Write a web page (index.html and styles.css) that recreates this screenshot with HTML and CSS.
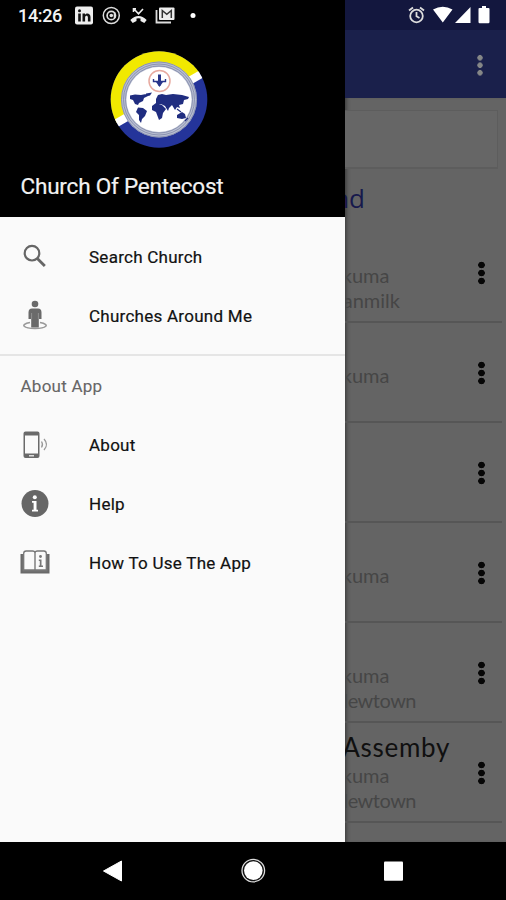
FILE: index.html
```html
<!DOCTYPE html>
<html lang="en">
<head>
<meta charset="utf-8">
<title>Church Of Pentecost</title>
<link rel="stylesheet" href="styles.css">
</head>
<body>
<main class="screen">
  <aside class="drawer">
    <header class="drawer-head">
      <div class="status">
        <span class="clock">14:26</span>
        <svg class="status-icons" width="140" height="30" viewBox="0 0 140 30">
          <rect x="13" y="6.500" width="18" height="18" rx="2" fill="#eee"/>
          <g fill="#111"><circle cx="17.500" cy="10.800" r="1.500"/><rect x="16.200" y="13.500" width="2.600" height="8"/><path d="M20.500 13.500H23v1.200c1.500-2.200 5.500-1.700 5.500 2.300v4.500h-2.600v-4c0-2.600-2.800-2.300-2.800 0v4h-2.600z"/></g>
          <g fill="none" stroke="#ddd"><circle cx="49.300" cy="15.500" r="8" stroke-width="1.500"/><circle cx="49.300" cy="15.500" r="4.200" stroke-width="1.700"/></g><circle cx="49.300" cy="15.500" r="1.800" fill="#ddd"/><path d="M52.500 12v6" stroke="#ddd" stroke-width="1.600"/>
          <path d="M72 9l4.500 4.800L81 9M71.500 12V8.800h2.500" fill="none" stroke="#eee" stroke-width="1.600"/>
          <path d="M68.300 20q8.200-8 16.400 0l-2.400 3-3.800-2v-2.500q-2-.6-4 0V21l-3.800 2z" fill="#eee"/>
          <path d="M94.500 10v12.500H109" fill="none" stroke="#ddd" stroke-width="1.800"/><rect x="97" y="7.500" width="15.500" height="12.500" rx="1" fill="#eee"/><path d="M100.300 18v-7.500l4.500 3.800 4.500-3.800V18" fill="none" stroke="#333" stroke-width="1.500"/>
          <circle cx="131" cy="15.500" r="2.500" fill="#fff"/>
        </svg>
      </div>
      <svg class="logo" width="98" height="98" viewBox="0 0 98 98">
        <clipPath id="disc"><circle cx="49" cy="49.500" r="48.300"/></clipPath>
        <g clip-path="url(#disc)">
          <rect width="98" height="98" fill="#24349a"/>
          <path d="M-2 78L100 17V-2H-2z" fill="#f1e900"/>
          <path d="M-2 78L100 19" stroke="#fff" stroke-width="8"/>
        </g>
        <circle cx="49" cy="49.500" r="38" fill="#b9bfd2"/>
        <g fill="none" stroke="#8088a8" stroke-width=".8"><circle cx="49" cy="49.500" r="37.500"/><circle cx="49" cy="49.500" r="35.500"/><circle cx="49" cy="49.500" r="33.500"/></g>
        <circle cx="49" cy="49.500" r="32.600" fill="#fff"/>
        <circle cx="49.500" cy="31" r="10.500" fill="#fff" stroke="#e7aaa0" stroke-width="1.500"/>
        <path d="M49.500 24.500v11" stroke="#28358a" stroke-width="3"/><path d="M43.500 29v2.500h12V29" fill="none" stroke="#28358a" stroke-width="1.400"/><path d="M46 32h7l-3.500 5z" fill="#28358a"/>
        <g fill="#202d80"><path d="M20 45.500l5-1 6 .5 5-1 2 2-4 2-1 3-4 2-1 2-3-1-2-4-3-1zM36 43.500l6-1-2 3-4 1zM28 57.500l5 .5 4 3-2 5-3 3-1 4-2-3v-5l-3-3zM46 49l2-4 4-1 4 1 7-1 9 1 7 2-1 2-4 1-1 4-4 1 1 3-3-1-2 3-3-5-3 3-1 3-3-5-4-2-5 1zM42 56l4-3 6 2 4 4-3 4-1 5-3 2-3-8-4-2zM67 65l5-3 3 2 1 4-4 1-5-1z"/><path d="M67 59l4 3M75 71l3-3" stroke="#202d80" stroke-width="1.200"/></g>
      </svg>
      <h1 class="app-name">Church Of Pentecost</h1>
    </header>
    <nav>
      <a class="item"><svg class="icon" width="30" height="32" viewBox="0 0 30 32"><circle cx="12" cy="12.200" r="7.300" fill="none" stroke="#666" stroke-width="2.200"/><path d="M17.300 17.500l7.500 7.500" stroke="#666" stroke-width="2.800"/></svg><span>Search Church</span></a>
      <a class="item"><svg class="icon" width="30" height="32" viewBox="0 0 30 32"><path d="M10 22.500c-11 2-6 6 5 6s16-4 5-6" fill="none" stroke="#999" stroke-width="1.600"/><g fill="#6a6a6a"><circle cx="15" cy="4" r="3.300"/><path d="M12 8.500h6q3.500 0 3.500 4V19h-2.700v8.500h-7.600V19H8.500v-6.500q0-4 3.500-4z"/></g><path d="M11.600 13v6M18.400 13v6" stroke="#aaa" stroke-width=".6"/></svg><span>Churches Around Me</span></a>
      <div class="rule"></div>
      <h2 class="group">About App</h2>
      <a class="item"><svg class="icon" width="30" height="32" viewBox="0 0 30 32"><path fill="#6a6a6a" fill-rule="evenodd" d="M5.500 2.500h12q2 0 2 2V27q0 2-2 2h-12q-2 0-2-2V4.500q0-2 2-2zM5 6.500v18h13v-18z"/><rect x="9" y="26" width="5" height="1.500" fill="#ddd"/><path d="M21.500 12.500q2 3 0 6M24 10q5 5.500 0 11" fill="none" stroke="#999" stroke-width="1.300"/></svg><span>About</span></a>
      <a class="item"><svg class="icon" width="30" height="32" viewBox="0 0 30 32"><circle cx="15" cy="15.500" r="13.500" fill="#666"/><circle cx="14.800" cy="9.300" r="2" fill="#fff"/><path d="M12 13h4.500v8.800H18v1.700h-6v-1.700h1.600v-7H12z" fill="#fff"/></svg><span>Help</span></a>
      <a class="item"><svg class="icon" width="30" height="32" viewBox="0 0 30 32"><path d="M1.500 7v18.500h27V7" fill="#777" stroke="#6a6a6a" stroke-width="2"/><path d="M3.700 6.500q0-2.500 2.500-2.500h6.300q2.500 0 2.500 2 0-2 2.500-2h6.300q2.500 0 2.500 2.500V23H3.700z" fill="#fafafa" stroke="#777" stroke-width="1.300"/><path d="M15 6v18" stroke="#777" stroke-width="1.400"/><circle cx="20.500" cy="9.500" r="1.400" fill="#777"/><path d="M18.800 12.500h2.700v6H23V20h-4.200v-1.500h1V14h-1z" fill="#777"/></svg><span>How To Use The App</span></a>
    </nav>
  </aside>
  <section class="page">
    <div class="page-status">
      <svg width="161" height="30" viewBox="0 0 161 30"><g fill="none" stroke="#ddd" stroke-width="1.800"><circle cx="71.500" cy="16" r="6.300"/><path d="M64 10.500l4-3M79 10.500l-4-3M71.500 12v4.300l3 1.700"/></g><path d="M88 9.500q9.800-5.500 19.500 0L97.800 22.500zM125.500 7v16H110zM134.500 8h2.500V6h4v2h2.500q1 0 1 1v13q0 1.200-1.200 1.200h-8.600q-1.200 0-1.200-1.200V9q0-1 1-1z" fill="#fff"/></svg>
    </div>
    <div class="app-bar"><i class="dots small"></i></div>
    <div class="content">
      <div class="search-box"></div>
      <h2 class="heading">nd</h2>
      <div class="row"><div class="lines"><b></b><p>kuma</p><p class="milk">anmilk</p></div><i class="dots"></i></div>
      <div class="row"><div class="lines"><b></b><p>kuma</p></div><i class="dots"></i></div>
      <div class="row"><div class="lines"></div><i class="dots"></i></div>
      <div class="row"><div class="lines"><b></b><p>kuma</p></div><i class="dots"></i></div>
      <div class="row"><div class="lines"><b></b><p>kuma</p><p class="town">Newtown</p></div><i class="dots"></i></div>
      <div class="row"><div class="lines"><b>Assemby</b><p>kuma</p><p class="town">Newtown</p></div><i class="dots"></i></div>
    </div>
  </section>
  <footer class="nav-bar">
    <svg width="506" height="58" viewBox="0 0 506 58"><path d="M103.500 29l18-10v20z" fill="#fff" stroke="#fff" stroke-linejoin="round"/><circle cx="253.300" cy="28.600" r="11.300" fill="#111" stroke="#ddd" stroke-width="1.300"/><circle cx="253.300" cy="28.600" r="9.300" fill="#fff"/><rect x="384" y="19.500" width="19" height="19.300" rx="1" fill="#fff"/></svg>
  </footer>
</main>
</body>
</html>
```
FILE: styles.css
```css
* { box-sizing: border-box; margin: 0; padding: 0; }
body { font-family: Roboto, sans-serif; background: #000; }
svg { display: block; flex: none; }
.screen { display: grid; grid-template: 842px 58px / 345px 161px; width: 506px; height: 900px; overflow: hidden; }
.drawer { background: #fafafa; overflow: hidden; }
.drawer-head { height: 217px; background: #000; color: #f2f2f2; }
.status { display: flex; height: 30px; padding-left: 18px; }
.clock { width: 44px; font-size: 18px; font-weight: 500; line-height: 32px; white-space: nowrap; letter-spacing: -.35px; }
.logo { margin: 20px 0 0 110px; }
.app-name { margin: 22px 0 0 20.500px; font-size: 22.500px; font-weight: 400; line-height: 32px; letter-spacing: -.2px; white-space: nowrap; -webkit-text-stroke: .2px #f2f2f2; }
nav { padding-top: 10px; }
.item { display: flex; align-items: center; height: 59.200px; padding-left: 20px; color: #111; font-size: 17px; font-weight: 400; white-space: nowrap; }
.icon { margin-right: 39px; }
.item span { letter-spacing: .26px; -webkit-text-stroke: .2px #111; }
.rule { height: 2px; margin-top: 9px; background: #e5e5e5; }
.group { height: 59px; padding: 1px 0 0 20.500px; color: #666; font-size: 17px; font-weight: 400; line-height: 58px; letter-spacing: .25px; -webkit-text-stroke: .1px #666; }
.page { background: #646464; overflow: hidden; }
.page-status { height: 30px; background: #13173e; }
.app-bar { display: flex; justify-content: flex-end; height: 68px; padding: 24px 23px 0 0; background: #1a204b; }
.content { height: 744px; box-shadow: inset 4px 0 4px -3px #333; }
.content::before { content: ""; display: block; height: 12px; }
.search-box { height: 59px; margin: 0 8px 0 0; border: 1px solid #5d5d5d; border-left: 0; border-bottom-width: 2px; background: #666; }
.heading { display: flex; justify-content: flex-end; width: 20px; margin-top: 12px; font: 400 26px/34px "Open Sans", sans-serif; color: #17194c; white-space: nowrap; clip-path: inset(0); }
.row { display: flex; justify-content: space-between; height: 100px; margin-right: 4px; padding: 0 17px 0 0; border-bottom: 2px solid #565656; }
.heading + .row { margin-top: 8px; }
.lines { width: 105px; height: 98px; padding-top: 7px; font-family: Lato, sans-serif; color: #464646; clip-path: inset(0); }
.lines b { display: flex; justify-content: flex-end; height: 33px; color: #101010; font-size: 26px; font-weight: 400; line-height: 34px; letter-spacing: .7px; }
.lines p { display: flex; justify-content: flex-end; width: 44.500px; height: 25px; font-size: 20px; line-height: 25px; white-space: nowrap; }
.lines .milk { width: 55px; }
.lines .town { width: 71px; letter-spacing: -.5px; }
.dots { width: 7px; height: 24px; margin-top: 38px; background: radial-gradient(circle, #060606 3px, transparent 3.600px) 0 0 / 7px 8px; }
.dots.small { width: 6px; height: 22.500px; margin-top: 0; background: radial-gradient(circle, #858787 2.400px, transparent 3px) 0 0 / 6px 7.500px; }
.nav-bar { grid-column: 1 / 3; background: #000; }
```
